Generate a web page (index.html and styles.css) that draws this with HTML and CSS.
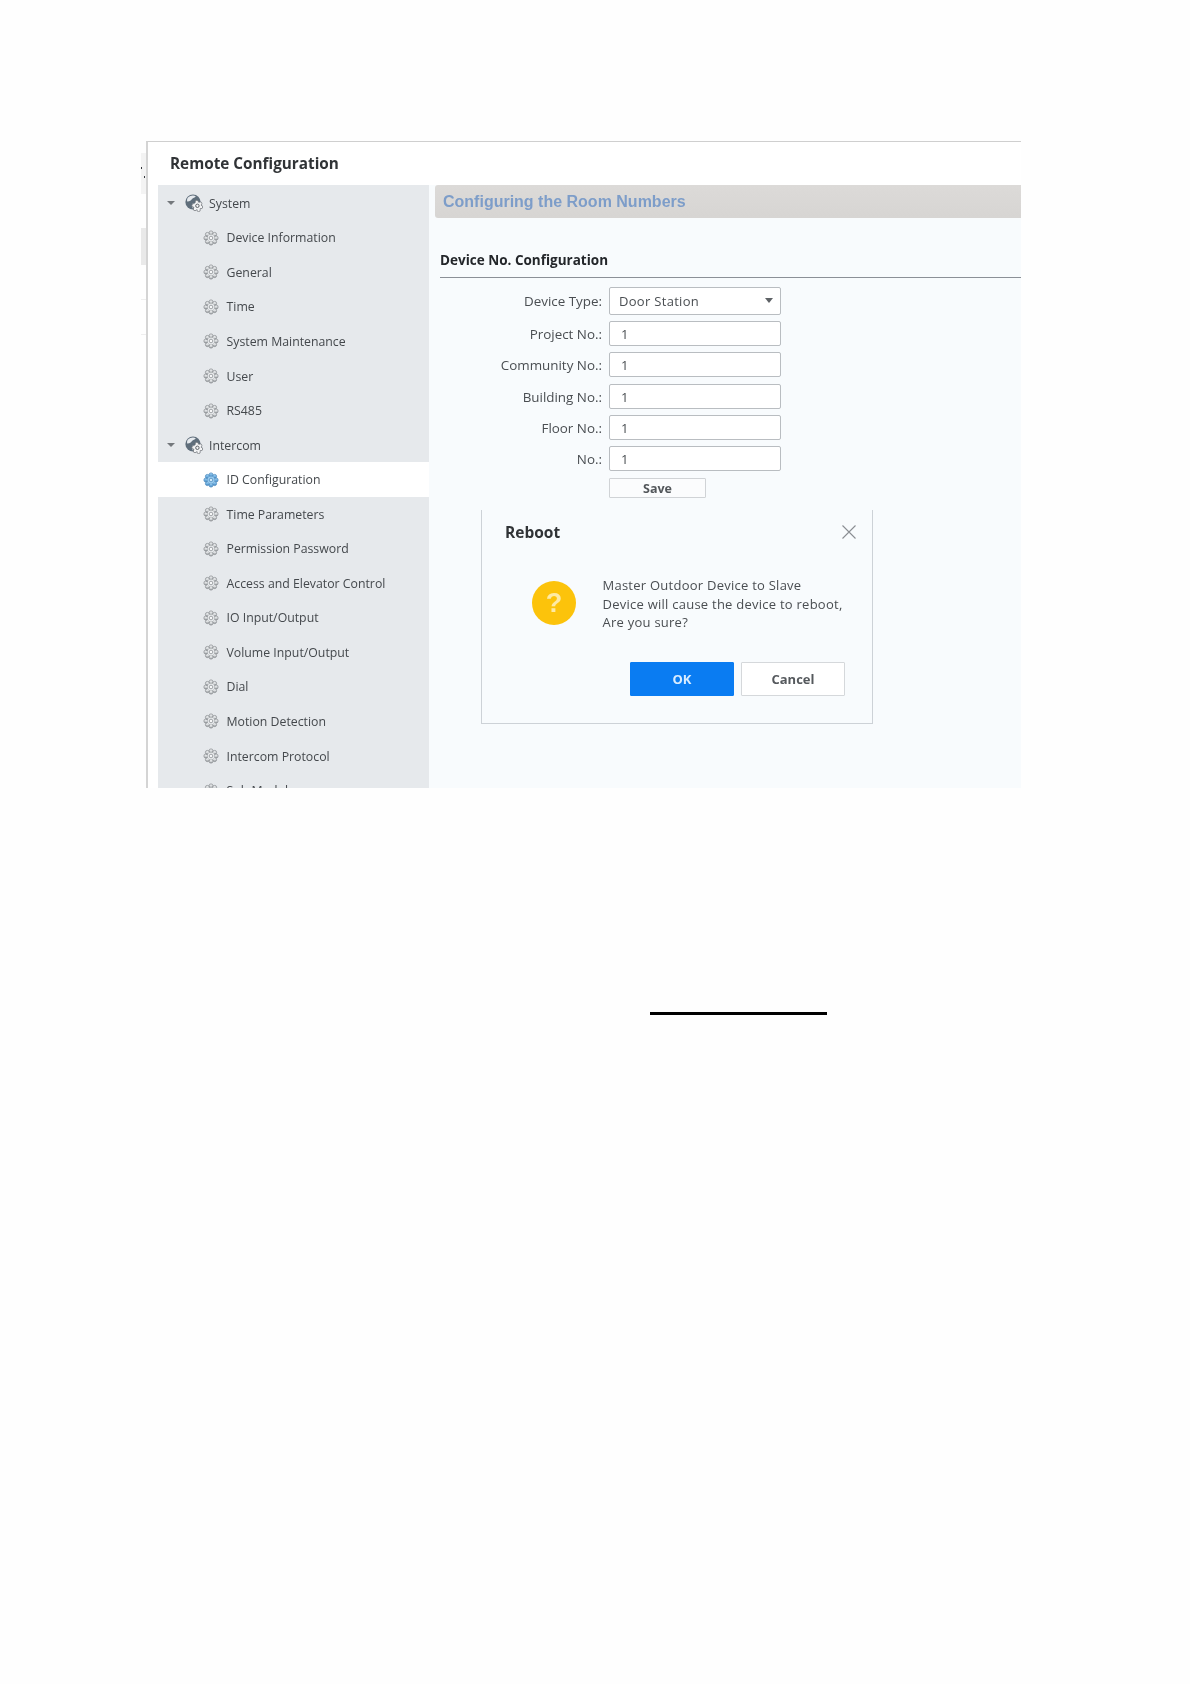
FILE: index.html
```html
<!DOCTYPE html>
<html lang="en">
<head>
<meta charset="utf-8">
<title>Remote Configuration</title>
<link rel="stylesheet" href="styles.css">
</head>
<body>
<svg class="defs" width="0" height="0" aria-hidden="true">
  <defs>
    <linearGradient id="petal" x1="0" y1="0" x2="0" y2="1">
      <stop offset="0" stop-color="#f1f2f3"/>
      <stop offset="0.55" stop-color="#d8dbdd"/>
      <stop offset="1" stop-color="#868a8e"/>
    </linearGradient>
    <linearGradient id="petal-blue" x1="0" y1="0" x2="0" y2="1">
      <stop offset="0" stop-color="#a9d6f3"/>
      <stop offset="0.55" stop-color="#6fb0e2"/>
      <stop offset="1" stop-color="#3f7fb5"/>
    </linearGradient>
    <symbol id="gear" viewBox="0 0 16 16">
      <g fill="url(#petal)" stroke="#8e9296" stroke-width="0.8">
        <circle cx="8" cy="2.9" r="2"/><circle cx="11.6" cy="4.4" r="2"/><circle cx="13.1" cy="8" r="2"/><circle cx="11.6" cy="11.6" r="2"/>
        <circle cx="8" cy="13.1" r="2"/><circle cx="4.4" cy="11.6" r="2"/><circle cx="2.9" cy="8" r="2"/><circle cx="4.4" cy="4.4" r="2"/>
      </g>
      <circle cx="8" cy="8" r="3.4" fill="#e9ebed"/>
      <circle cx="8" cy="8" r="1.8" fill="#f6f7f8" stroke="#8e9296" stroke-width="0.8"/>
    </symbol>
    <symbol id="gear-blue" viewBox="0 0 16 16">
      <g fill="url(#petal-blue)" stroke="#4f8dc0" stroke-width="0.8">
        <circle cx="8" cy="2.9" r="2"/><circle cx="11.6" cy="4.4" r="2"/><circle cx="13.1" cy="8" r="2"/><circle cx="11.6" cy="11.6" r="2"/>
        <circle cx="8" cy="13.1" r="2"/><circle cx="4.4" cy="11.6" r="2"/><circle cx="2.9" cy="8" r="2"/><circle cx="4.4" cy="4.4" r="2"/>
      </g>
      <circle cx="8" cy="8" r="3.4" fill="#9accef"/>
      <circle cx="8" cy="8" r="1.8" fill="#cfe8f8" stroke="#4f8dc0" stroke-width="0.8"/>
    </symbol>
    <symbol id="globe" viewBox="0 0 18 18">
      <circle cx="8" cy="8" r="7.6" fill="#5f6e7b"/>
      <path d="M3 3.6C5 1.4 8.6 1 10.8 2.2 9.8 3.8 8.2 3.6 7 5 6 6.4 4.6 7.6 2.2 7.4 1.8 6 2.2 4.6 3 3.6Z" fill="#e6eaee"/>
      <path d="M7.6 9.4C9 9 10 10 10 11.4L8 14.6C6.6 13.6 6.6 11 7.6 9.4Z" fill="#b7c0c8"/>
      <g fill="#f2f3f4" stroke="#6a6f74" stroke-width="0.7">
        <circle cx="11.8" cy="8" r="1.7"/><circle cx="15.2" cy="9.6" r="1.7"/><circle cx="16" cy="13" r="1.7"/><circle cx="13.6" cy="15.9" r="1.7"/><circle cx="10" cy="15" r="1.7"/><circle cx="8.6" cy="11.4" r="1.7"/>
      </g>
      <circle cx="12.4" cy="11.8" r="3.6" fill="#f2f3f4"/>
      <circle cx="12.4" cy="11.8" r="1.7" fill="none" stroke="#5d6267" stroke-width="1"/>
    </symbol>
  </defs>
</svg>

<main class="sheet">
  <div class="shot">
    <div class="rail">
      <span class="rail-a"><i class="dot dot-one"></i><i class="dot dot-two"></i></span>
      <span class="rail-b"></span>
      <span class="rail-c"></span>
      <span class="rail-d"></span>
    </div>
    <section class="window">
      <h1 class="window-title">Remote Configuration</h1>
      <div class="panes">
        <nav class="tree">
          <div class="row group"><span class="caret"></span><svg class="globe"><use href="#globe"/></svg><span>System</span></div>
          <div class="row item"><svg class="gear"><use href="#gear"/></svg><span>Device Information</span></div>
          <div class="row item"><svg class="gear"><use href="#gear"/></svg><span>General</span></div>
          <div class="row item"><svg class="gear"><use href="#gear"/></svg><span>Time</span></div>
          <div class="row item"><svg class="gear"><use href="#gear"/></svg><span>System Maintenance</span></div>
          <div class="row item"><svg class="gear"><use href="#gear"/></svg><span>User</span></div>
          <div class="row item"><svg class="gear"><use href="#gear"/></svg><span>RS485</span></div>
          <div class="row group"><span class="caret"></span><svg class="globe"><use href="#globe"/></svg><span>Intercom</span></div>
          <div class="row item active"><svg class="gear"><use href="#gear-blue"/></svg><span>ID Configuration</span></div>
          <div class="row item"><svg class="gear"><use href="#gear"/></svg><span>Time Parameters</span></div>
          <div class="row item"><svg class="gear"><use href="#gear"/></svg><span>Permission Password</span></div>
          <div class="row item"><svg class="gear"><use href="#gear"/></svg><span>Access and Elevator Control</span></div>
          <div class="row item"><svg class="gear"><use href="#gear"/></svg><span>IO Input/Output</span></div>
          <div class="row item"><svg class="gear"><use href="#gear"/></svg><span>Volume Input/Output</span></div>
          <div class="row item"><svg class="gear"><use href="#gear"/></svg><span>Dial</span></div>
          <div class="row item"><svg class="gear"><use href="#gear"/></svg><span>Motion Detection</span></div>
          <div class="row item"><svg class="gear"><use href="#gear"/></svg><span>Intercom Protocol</span></div>
          <div class="row item"><svg class="gear"><use href="#gear"/></svg><span>Sub Module</span></div>
        </nav>
        <div class="content">
          <h2 class="banner">Configuring the Room Numbers</h2>
          <div class="body">
            <h3 class="section-title">Device No. Configuration</h3>
            <form class="form">
              <label class="label label-tall">Device Type:</label>
              <div class="field select">Door Station<span class="select-caret"></span></div>
              <label class="label">Project No.:</label>
              <div class="field">1</div>
              <label class="label">Community No.:</label>
              <div class="field">1</div>
              <label class="label">Building No.:</label>
              <div class="field">1</div>
              <label class="label">Floor No.:</label>
              <div class="field">1</div>
              <label class="label">No.:</label>
              <div class="field">1</div>
              <div class="save-slot"><span class="save">Save</span></div>
            </form>
          </div>
          <div class="dialog">
            <div class="dialog-head">
              <span class="dialog-title">Reboot</span>
              <svg class="close" viewBox="0 0 14 14"><path d="M.5.5l13 13M13.5.5l-13 13"/></svg>
            </div>
            <div class="dialog-body">
              <span class="ask">?</span>
              <p class="message">Master Outdoor Device to Slave<br>Device will cause the device to reboot,<br>Are you sure?</p>
            </div>
            <div class="dialog-actions">
              <span class="btn primary">OK</span>
              <span class="btn">Cancel</span>
            </div>
          </div>
        </div>
      </div>
    </section>
  </div>
  <div class="rule"></div>
</main>
</body>
</html>
```
FILE: styles.css
```css
* { box-sizing: border-box; }
html, body { margin: 0; padding: 0; }
body {
  background: #fefefe;
  font-family: "Open Sans", "Noto Sans", sans-serif;
  color: #3c4044;
}
.defs { position: absolute; }
.sheet { height: 1684px; padding-top: 141px; }
.shot { display: flex; margin-left: 141px; height: 647px; filter: blur(0.45px); }

.rail { width: 5px; display: flex; flex-direction: column; }
.rail span { display: block; }
.rail-a { height: 41px; margin-top: 12px; background: #f3f3f3; flex: none; position: relative; }
.dot { position: absolute; width: 1px; height: 2px; background: #33363a; }
.dot-one { left: 0; top: 14px; }
.dot-two { left: 3px; top: 23px; }
.rail-b { height: 37px; margin-top: 34px; background: #e9e9e9; }
.rail-c { height: 1px; margin-top: 34px; background: #eeeeee; }
.rail-d { height: 1px; margin-top: 34px; background: #eeeeee; }

.window {
  width: 875px;
  height: 647px;
  background: #ffffff;
  border-top: 1px solid #cfcfcf;
  border-left: 2px solid #d4d4d4;
  overflow: hidden;
}
.window-title {
  margin: 0;
  height: 43px;
  padding-left: 22px;
  font-size: 15.3px;
  line-height: 42px;
  font-weight: 700;
  color: #303336;
}
.panes { display: flex; padding-left: 10px; height: 603px; }

.tree { width: 271px; flex: none; padding-top: 1px; background: #e6e9ec; overflow: hidden; }
.row {
  display: flex;
  align-items: center;
  height: 34.55px;
  font-size: 12.3px;
  color: #44484c;
}
.group { padding-left: 9px; }
.item { padding-left: 45px; }
.active { background: #ffffff; }
.caret {
  width: 0; height: 0;
  border-left: 4px solid transparent;
  border-right: 4px solid transparent;
  border-top: 4px solid #74787c;
  margin-top: -1px;
  margin-right: 10px;
}
.globe { width: 18px; height: 18px; margin-right: 6px; flex: none; }
.gear { width: 16px; height: 16px; margin-right: 7.5px; flex: none; }

.content { position: relative; flex: 1; background: #f8fbfd; }
.banner {
  margin: 0 0 0 6px;
  height: 33px;
  padding-left: 8px;
  background: linear-gradient(#dcdad8, #d7d5d3);
  border-radius: 3px 0 0 3px;
  font-family: "Liberation Sans", Arial, sans-serif;
  font-size: 16px;
  line-height: 33.5px;
  font-weight: 700;
  color: #7d9dc9;
}
.body { padding: 0 0 0 11px; }
.section-title {
  margin: 0;
  padding-top: 31px;
  height: 60px;
  border-bottom: 1px solid #8b9097;
  font-size: 13.5px;
  line-height: 22px;
  font-weight: 700;
  color: #23262a;
}
.form {
  display: grid;
  grid-template-columns: 162px 172px;
  column-gap: 7px;
  row-gap: 6.2px;
  margin-top: 9px;
}
.label {
  height: 25px;
  font-size: 13.4px;
  line-height: 26px;
  text-align: right;
  color: #4a4e52;
}
.label-tall { height: 28px; line-height: 28px; }
.field {
  position: relative;
  height: 25px;
  padding-left: 11px;
  background: #ffffff;
  border: 1px solid #b9bdc1;
  border-radius: 2px;
  font-size: 13px;
  line-height: 24px;
  color: #4a4e52;
}
.select { height: 28px; padding-left: 9px; line-height: 27px; letter-spacing: 0.3px; }
.select-caret {
  position: absolute;
  right: 7px;
  top: 10px;
  width: 0; height: 0;
  border-left: 4.5px solid transparent;
  border-right: 4.5px solid transparent;
  border-top: 5px solid #5e6266;
}
.save-slot { grid-column: 2; margin-top: 1px; }
.save {
  display: block;
  width: 97px;
  height: 20px;
  background: #fbfcfd;
  border: 1px solid #d0d3d6;
  border-radius: 1px;
  font-size: 12.5px;
  line-height: 19px;
  font-weight: 700;
  text-align: center;
  color: #53575b;
}

.dialog {
  position: absolute;
  left: 52px;
  top: 325px;
  width: 392px;
  height: 214px;
  border: 1px solid #cdd2d7;
  border-top: 0;
  background: #f8fbfd;
  display: flex;
  flex-direction: column;
}
.dialog-head {
  display: flex;
  justify-content: space-between;
  align-items: center;
  height: 44px;
  padding: 0 16px 0 23px;
}
.dialog-title { font-size: 15.5px; font-weight: 700; color: #303336; }
.close { width: 14px; height: 14px; fill: none; stroke: #8a8e92; stroke-width: 1.1; }
.dialog-body { display: flex; padding: 22px 0 0 50px; height: 107.5px; }
.ask {
  width: 44px;
  height: 44px;
  flex: none;
  border-radius: 50%;
  background: #fcc30b;
  color: #fdeaa6;
  font-family: "Liberation Sans", Arial, sans-serif;
  font-size: 27px;
  font-weight: 700;
  line-height: 44px;
  text-align: center;
  margin-top: 5px;
}
.message {
  margin: 0 0 0 26.5px;
  font-size: 13px;
  line-height: 18.6px;
  letter-spacing: 0.25px;
  white-space: nowrap;
  color: #4a4e52;
}
.dialog-actions { display: flex; justify-content: flex-end; gap: 7px; padding-right: 27px; }
.btn {
  width: 104px;
  height: 34px;
  background: #ffffff;
  border: 1px solid #d5d8db;
  border-radius: 1px;
  font-size: 13px;
  line-height: 32px;
  font-weight: 700;
  text-align: center;
  color: #55595d;
}
.primary { background: #0a7cf2; border-color: #0a7cf2; color: #d9ecff; }

.rule { width: 177px; height: 3px; margin: 224px 0 0 650px; background: #000000; }
```
